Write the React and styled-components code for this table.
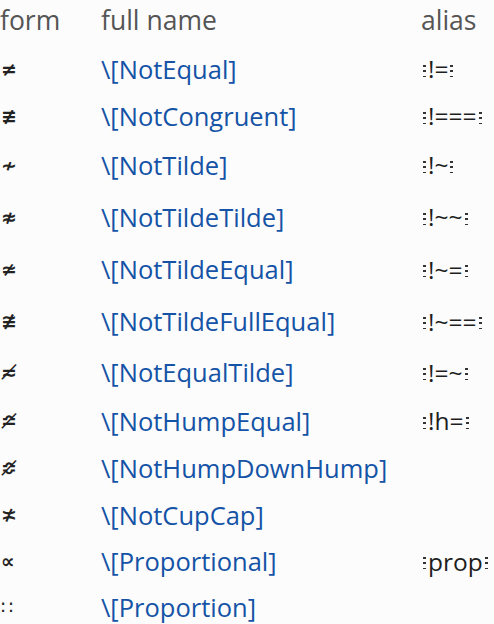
import React from "react";
import styled, { createGlobalStyle } from "styled-components";

const GlobalStyle = createGlobalStyle`
  html, body {
    margin: 0;
    padding: 0;
    background: #fcfcfc;
  }
  body {
    font-family: "Source Sans Pro", "Open Sans", "Liberation Sans", sans-serif;
  }
`;

const Table = styled.div`
  display: grid;
  grid-template-columns: 101px 320px 1fr;
  width: 494px;
  overflow: hidden;
`;

const HeadCell = styled.div`
  height: 45px;
  display: flex;
  align-items: center;
  padding-bottom: 6px;
  box-sizing: border-box;
  font-size: 26.5px;
  color: #555;
  white-space: nowrap;
`;

const Cell = styled.div`
  height: ${(p) => p.h}px;
  display: flex;
  align-items: center;
  white-space: nowrap;
`;

const Form = styled.span`
  font-family: "DejaVu Sans", sans-serif;
  font-weight: ${(p) => (p.light ? "normal" : "bold")};
  font-size: 19px;
  color: #222;
  padding-left: 1px;
`;

const Name = styled.a`
  font-size: 25.5px;
  color: #1553a6;
  text-decoration: none;
`;

const Alias = styled.span`
  display: flex;
  align-items: center;
  font-size: 24.5px;
  color: #1e1e1e;
`;

const Esc = styled.span`
  display: inline-block;
  width: 3px;
  height: 13px;
  margin: 5px 2px 0;
  background: repeating-linear-gradient(
    to bottom,
    #333 0 1.6px,
    transparent 1.6px 5.4px
  );
`;

const rows = [
  { form: "\u2260", name: "NotEqual", alias: "!=", h: 47 },
  { form: "\u2262", name: "NotCongruent", alias: "!===", h: 47 },
  { form: "\u2241", name: "NotTilde", alias: "!~", h: 51 },
  { form: "\u2249", name: "NotTildeTilde", alias: "!~~", h: 53 },
  { form: "\u2244", name: "NotTildeEqual", alias: "!~=", h: 52 },
  { form: "\u2247", name: "NotTildeFullEqual", alias: "!~==", h: 52 },
  { form: "\u2242\u0338", name: "NotEqualTilde", alias: "!=~", h: 50 },
  { form: "\u224F\u0338", name: "NotHumpEqual", alias: "!h=", h: 47 },
  { form: "\u224E\u0338", name: "NotHumpDownHump", alias: "", h: 47 },
  { form: "\u226D", name: "NotCupCap", alias: "", h: 47 },
  { form: "\u221D", name: "Proportional", alias: "prop", h: 46 },
  { form: "\u2237", name: "Proportion", alias: "", h: 46, light: true },
];

export default function App() {
  return (
    <>
      <GlobalStyle />
      <Table>
        <HeadCell>form</HeadCell>
        <HeadCell>full name</HeadCell>
        <HeadCell>alias</HeadCell>
        {rows.map((r) => (
          <React.Fragment key={r.name}>
            <Cell h={r.h}>
              <Form light={r.light}>{r.form}</Form>
            </Cell>
            <Cell h={r.h}>
              <Name href="#">\[{r.name}]</Name>
            </Cell>
            <Cell h={r.h}>
              {r.alias && (
                <Alias>
                  <Esc />
                  {r.alias}
                  <Esc />
                </Alias>
              )}
            </Cell>
          </React.Fragment>
        ))}
      </Table>
    </>
  );
}
